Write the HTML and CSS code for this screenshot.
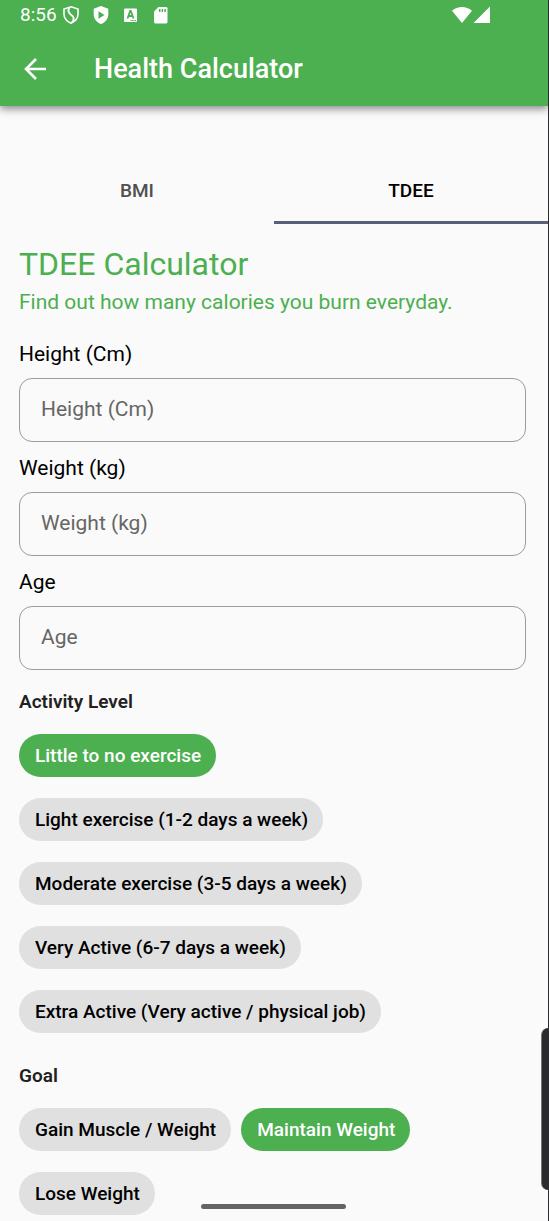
FILE: index.html
```html
<!DOCTYPE html>
<html lang="en">
<head>
<meta charset="utf-8">
<meta name="viewport" content="width=device-width, initial-scale=1">
<title>Health Calculator</title>
<link rel="stylesheet" href="styles.css">
</head>
<body>
<div class="screen">
  <header class="top">
    <div class="status">
      <div class="status-left">
        <span class="clock">8:56</span>
        <svg class="icon" viewBox="0 0 20 20" fill="none" stroke="#fff" stroke-width="1.600"><path d="M10 1.800 17 4v5c0 4.200-3 7.500-7 9.200C6 16.500 3 13.200 3 9V4z"/><path stroke-width="1.900" d="M8.500 2.800c-1.900 2.500-1.400 4.300.8 6.300l2.400 2.200c1.600 1.700 1.300 3.700-.7 6"/></svg>
        <svg class="icon" viewBox="0 0 20 20"><path fill="#fff" d="M10 1 17.300 3.700v5.500c0 4.600-3.100 8.300-7.300 9.900-4.200-1.600-7.300-5.300-7.300-9.900V3.700z"/><path fill="#4caf50" d="M7.500 6.300 13.500 10l-6 3.700z"/></svg>
        <svg class="icon" viewBox="0 0 20 20"><rect x="3" y="3.500" width="13" height="13.500" rx="1" fill="#fff"/><path fill="none" stroke="#4caf50" stroke-width="1.800" d="M6.500 13.500 9.200 6h.6l2.700 7.500M7.500 11h4"/><path stroke="#4caf50" stroke-dasharray="1 .5" d="M9.500 15.500h5.500"/></svg>
        <svg class="icon" viewBox="0 0 20 20"><path fill="#fff" d="M7.500 2h7.500c.8 0 1.500.7 1.500 1.500v13.500c0 .8-.7 1.500-1.500 1.500h-10.500c-.8 0-1.500-.7-1.500-1.500V6.500z"/><path stroke="#4caf50" stroke-width="1.500" d="M8.700 4v3M11.400 4v3M14.100 4v3"/></svg>
      </div>
      <svg class="signal" viewBox="0 0 40 20" fill="#fff"><path d="M0 5.700C5.800.800 14.200.800 20 5.700L10 18zM21.500 18 38 1.500V18z"/></svg>
    </div>
    <div class="bar">
      <button class="back" type="button" aria-label="Back"><svg viewBox="0 0 24 24" fill="none" stroke="#fff" stroke-width="2.600"><path d="M13 2 3 12l10 10M3 12h20"/></svg></button>
      <h1 class="title">Health Calculator</h1>
    </div>
  </header>
  <nav class="tabs" role="tablist">
    <button class="tab" type="button" role="tab" aria-selected="false">BMI</button>
    <button class="tab tab-active" type="button" role="tab" aria-selected="true">TDEE</button>
  </nav>
  <main>
    <form class="form">
      <h2 class="heading">TDEE Calculator</h2>
      <p class="lead">Find out how many calories you burn everyday.</p>
      <div class="fields">
        <div class="field"><label for="height">Height (Cm)</label><input id="height" type="text" inputmode="decimal" placeholder="Height (Cm)"></div>
        <div class="field"><label for="weight">Weight (kg)</label><input id="weight" type="text" inputmode="decimal" placeholder="Weight (kg)"></div>
        <div class="field"><label for="age">Age</label><input id="age" type="text" inputmode="numeric" placeholder="Age"></div>
      </div>
      <fieldset class="group">
        <legend>Activity Level</legend>
        <div class="chips chips-stacked">
          <label class="chip"><input type="radio" name="activity" checked>Little to no exercise</label>
          <label class="chip"><input type="radio" name="activity">Light exercise (1-2 days a week)</label>
          <label class="chip"><input type="radio" name="activity">Moderate exercise (3-5 days a week)</label>
          <label class="chip"><input type="radio" name="activity">Very Active (6-7 days a week)</label>
          <label class="chip"><input type="radio" name="activity">Extra Active (Very active / physical job)</label>
        </div>
      </fieldset>
      <fieldset class="group">
        <legend>Goal</legend>
        <div class="chips">
          <label class="chip"><input type="radio" name="goal">Gain Muscle / Weight</label>
          <label class="chip"><input type="radio" name="goal" checked>Maintain Weight</label>
          <label class="chip"><input type="radio" name="goal">Lose Weight</label>
        </div>
      </fieldset>
    </form>
  </main>
</div>
<div class="edge-handle"></div>
<div class="home-indicator"></div>
</body>
</html>
```
FILE: styles.css
```css
* { box-sizing: border-box; }
body {
  margin: 0;
  background: #fafafa;
  color: #000;
  font-family: Roboto, sans-serif;
}
button, input { font: inherit; }
.screen {
  min-height: 100vh;
  border-right: 1px solid #2b2b2e;
}
.top {
  background: #4caf50;
  color: #fff;
  box-shadow: 0 3px 8px rgba(0, 0, 0, .45);
  clip-path: inset(0 0 -16px 0);
}
.status {
  display: flex;
  justify-content: space-between;
  align-items: center;
  height: 32px;
  padding: 0 56px 2px 20px;
}
.status-left { display: flex; align-items: center; }
.clock { font-size: 19px; line-height: 24px; margin-right: 4px; }
.icon { width: 20px; height: 20px; margin-right: 10px; }
.signal { width: 40px; height: 20px; }
.bar {
  display: flex;
  align-items: center;
  height: 74px;
  padding: 0 20px;
  gap: 44px;
}
.back {
  display: flex;
  justify-content: center;
  width: 30px;
  padding: 0;
  border: 0;
  background: none;
}
.back svg { width: 24px; height: 24px; }
.title { margin: 0; font-size: 27px; line-height: 32px; font-weight: 500; }
.tabs { display: flex; padding-top: 52px; }
.tab {
  flex: 1;
  height: 66px;
  padding: 2px 0 0;
  border: 0;
  border-bottom: 3px solid transparent;
  background: none;
  color: #505050;
  font-size: 19px;
  font-weight: 500;
}
.tab-active { color: #000; border-bottom-color: #566076; }
.form { padding: 20px 22px 6px 19px; }
.heading {
  margin: 0;
  color: #4caf50;
  font-size: 32px;
  line-height: 40px;
  font-weight: 400;
}
.lead {
  margin: 4px 0 24px;
  color: #4caf50;
  font-size: 21px;
  line-height: 28px;
}
.fields { display: flex; flex-direction: column; gap: 12px; }
.field { display: flex; flex-direction: column; gap: 10px; }
.field label { font-size: 21px; line-height: 28px; }
.field input {
  width: 100%;
  height: 64px;
  padding: 0 21px 2px;
  border: 1px solid #9c9c9c;
  border-radius: 13px;
  background: transparent;
  font-size: 21px;
}
.field input::placeholder { color: #666; opacity: 1; }
.group { margin: 0; padding: 20px 0 0; border: 0; min-width: 0; }
.group legend {
  float: left;
  width: 100%;
  padding: 0;
  margin-bottom: 20px;
  color: #212121;
  font-size: 19px;
  line-height: 24px;
  font-weight: 600;
}
.chips {
  clear: both;
  display: flex;
  flex-wrap: wrap;
  gap: 21px 10px;
}
.chips-stacked { flex-direction: column; align-items: flex-start; }
.group + .group { padding-top: 31px; }
.chip {
  padding: 0 15px 0 16px;
  border-radius: 22px;
  background: #e0e0e0;
  font-size: 19px;
  line-height: 43px;
  font-weight: 500;
}
.chip input {
  appearance: none;
  position: absolute;
  margin: 0;
}
.chip:has(input:checked) { background: #4caf50; color: #fff; }
.edge-handle {
  position: fixed;
  right: 0;
  bottom: 31px;
  width: 8px;
  height: 162px;
  border-left: 1px solid #777;
  border-radius: 7px 0 0 7px;
  background: #2b2b2e;
}
.home-indicator {
  position: fixed;
  left: 50%;
  bottom: 12px;
  width: 145px;
  height: 5px;
  margin-left: -74px;
  border-radius: 3px;
  background: #646464;
}
```
